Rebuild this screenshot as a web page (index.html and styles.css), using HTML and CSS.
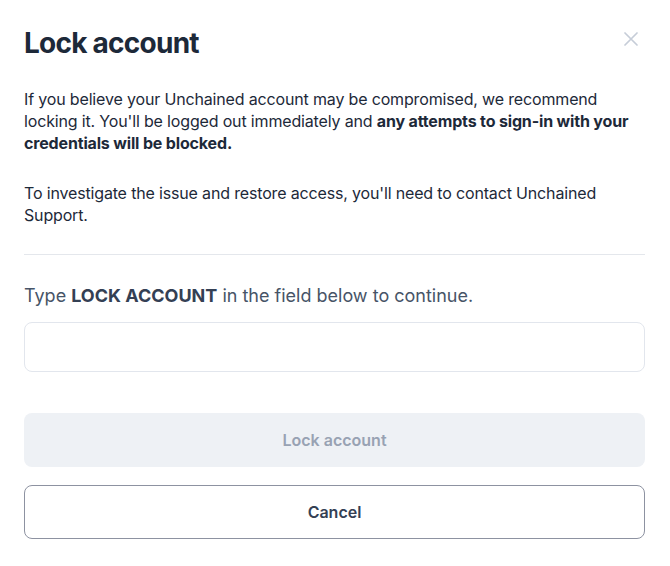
FILE: index.html
```html
<!DOCTYPE html>
<html lang="en">
<head>
<meta charset="utf-8">
<title>Lock account</title>
<link rel="stylesheet" href="styles.css">
</head>
<body>
<div class="modal">
  <div class="header">
    <h1 class="title">Lock account</h1>
    <button class="close" aria-label="Close">
      <svg width="14" height="14" viewBox="0 0 14 14"><path d="M1 1L13 13M13 1L1 13" stroke="#c6cdd8" stroke-width="1.7" stroke-linecap="round"/></svg>
    </button>
  </div>
  <p class="text">If you believe your Unchained account may be compromised, we recommend locking it. You'll be logged out immediately and <strong>any attempts to sign-in with your credentials will be blocked.</strong></p>
  <p class="text">To investigate the issue and restore access, you'll need to contact Unchained Support.</p>
  <hr class="divider">
  <label class="prompt" for="confirm">Type <strong>LOCK ACCOUNT</strong> in the field below to continue.</label>
  <input id="confirm" class="field" type="text">
  <div class="actions">
    <button class="btn btn-disabled" disabled>Lock account</button>
    <button class="btn btn-outline">Cancel</button>
  </div>
</div>
</body>
</html>
```
FILE: styles.css
```css
* { box-sizing: border-box; }
html, body { margin: 0; padding: 0; background: #fff; }
body { font-family: Inter, "Noto Sans", sans-serif; color: #1d2939; }
.modal {
  width: 670px;
  padding: 25px 25px 0 24px;
  display: flex;
  flex-direction: column;
}
.header {
  display: flex;
  justify-content: space-between;
  align-items: center;
  height: 36px;
}
.title {
  margin: 0;
  font-size: 28px;
  line-height: 36px;
  font-weight: 700;
  color: #1d2939;
  letter-spacing: -0.75px;
}
.close {
  border: 0;
  background: none;
  padding: 0;
  width: 14px;
  height: 14px;
  margin-right: 7px;
  margin-top: -8px;
  display: flex;
  cursor: pointer;
}
.text {
  margin: 27px 0 0;
  font-size: 16px;
  line-height: 22px;
  color: #1d2939;
  letter-spacing: -0.16px;
}
.text + .text { margin-top: 28px; }
.text strong { font-weight: 700; }
.divider {
  margin: 28px 0 0;
  border: 0;
  border-top: 1px solid #e4e7ec;
}
.prompt {
  margin-top: 27px;
  font-size: 18px;
  line-height: 28px;
  color: #475467;
}
.prompt strong { color: #344054; font-weight: 700; }
.field {
  margin-top: 12px;
  height: 50px;
  border: 1px solid #e2e6ed;
  border-radius: 8px;
  padding: 0 14px;
  font: inherit;
  font-size: 16px;
  outline: none;
}
.actions {
  margin-top: 41px;
  display: flex;
  flex-direction: column;
  gap: 18px;
}
.btn {
  height: 54px;
  border-radius: 8px;
  font-family: Inter, "Noto Sans", sans-serif;
  font-size: 16px;
  font-weight: 600;
}
.btn-disabled {
  background: #eef1f5;
  border: 0;
  color: #98a2b3;
}
.btn-outline {
  background: #fff;
  border: 1px solid #8d92a1;
  color: #344054;
}
```
